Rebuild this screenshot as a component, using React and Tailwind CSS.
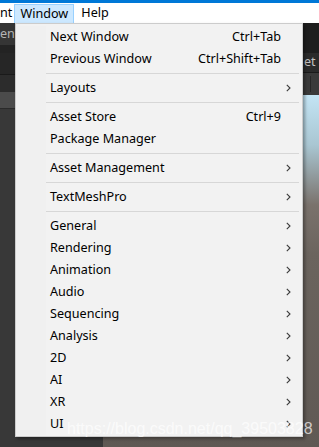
import React from 'react';

const items = [
  { label: 'Next Window', shortcut: 'Ctrl+Tab' },
  { label: 'Previous Window', shortcut: 'Ctrl+Shift+Tab' },
  { sep: true },
  { label: 'Layouts', sub: true },
  { sep: true },
  { label: 'Asset Store', shortcut: 'Ctrl+9' },
  { label: 'Package Manager' },
  { sep: true },
  { label: 'Asset Management', sub: true },
  { sep: true },
  { label: 'TextMeshPro', sub: true },
  { sep: true },
  { label: 'General', sub: true },
  { label: 'Rendering', sub: true },
  { label: 'Animation', sub: true },
  { label: 'Audio', sub: true },
  { label: 'Sequencing', sub: true },
  { label: 'Analysis', sub: true },
  { label: '2D', sub: true },
  { label: 'AI', sub: true },
  { label: 'XR', sub: true },
  { label: 'UI', sub: true },
];

const Chevron = () => (
  <svg width="5" height="8" viewBox="0 0 5 8" className="ml-[5px]">
    <path d="M0.8 0.8 L4 4 L0.8 7.2" fill="none" stroke="#3a3a3a" strokeWidth="1.1" />
  </svg>
);

const MenuRow = ({ item }) => {
  if (item.sep) {
    return (
      <div className="flex h-[7px]">
        <div className="w-[30px] bg-[#f0f0f0]" />
        <div className="flex-1 flex flex-col justify-center pr-[3px]">
          <div className="h-px bg-[#d7d7d7]" />
        </div>
      </div>
    );
  }
  return (
    <div className="flex h-[22px] items-center">
      <div className="w-[30px] h-full bg-[#f0f0f0]" />
      <span className="flex-1 pl-[4px] text-black">{item.label}</span>
      {item.shortcut && <span className="text-black">{item.shortcut}</span>}
      <div className="w-[21px] flex items-center">{item.sub && <Chevron />}</div>
    </div>
  );
};

export default function App() {
  return (
    <div className="relative w-[319px] h-[447px] overflow-hidden bg-[#383838] text-[12.6px]" style={{ fontFamily: '"Noto Sans", sans-serif' }}>
      {/* title bar edge + menu bar */}
      <div className="h-[3px] bg-[#0078d7]" />
      <div className="h-[20px] bg-white flex items-stretch">
        <span className="flex items-center text-black">nt</span>
        <div className="ml-[2px] mt-px w-[60px] bg-[#cce8ff] border border-b-0 border-[#99d1ff] flex items-center justify-center text-black">Window</div>
        <span className="ml-[7px] flex items-center text-black">Help</span>
      </div>

      {/* editor behind the menu */}
      <div className="flex h-[424px]">
        <div className="w-[103px] flex flex-col">
          <div className="h-[22px] bg-[#353535] flex items-end pb-[1px] text-[#b4b4b4]">ent</div>
          <div className="h-[8px] bg-[#232323]" />
          <div className="h-[22px] bg-[#262626] border-b border-[#1a1a1a]" />
          <div className="h-[17px] bg-[#2c2c2c]" />
          <div className="h-[17px] bg-[#4b4b4b] border-b border-[#2a2a2a]" />
          <div className="flex-1 bg-[#383838]" />
        </div>
        <div className="flex-1 flex flex-col">
          <div className="h-[30px] bg-[#1e1e1e]" />
          <div className="h-[20px] bg-[#2b2b2b] flex items-center justify-end border-b border-[#1a1a1a]">
            <div className="w-[15px] overflow-hidden">
              <span className="text-[#c2c2c2] whitespace-nowrap">et S</span>
            </div>
          </div>
          <div className="h-[22px] bg-[#3a3a3a] flex items-center justify-end gap-[6px] pr-[8px] text-[#9a9a9a]">
            <div className="w-px h-[16px] bg-[#262626]" />
          </div>
          <div className="flex-1 bg-[linear-gradient(180deg,#c3e4f4_0px,#a9c6d2_50px,#7a726c_110px,#6b645e_160px,#5f5954_100%)]" />
        </div>
      </div>

      {/* Window dropdown */}
      <div className="absolute left-[15px] top-[23px] w-[288px] border border-[#cccccc] bg-[#f2f2f2] pt-[2px] pb-[1px] shadow-[2px_2px_3px_rgba(0,0,0,0.35)]">
        {items.map((item, i) => (
          <MenuRow key={i} item={item} />
        ))}
      </div>

      {/* watermark */}
      <div className="absolute left-[67px] top-[421px] leading-none text-[16px] text-white/70 whitespace-nowrap" style={{ fontFamily: '"Liberation Sans", sans-serif' }}>
        https://blog.csdn.net/qq_39503828
      </div>
    </div>
  );
}
